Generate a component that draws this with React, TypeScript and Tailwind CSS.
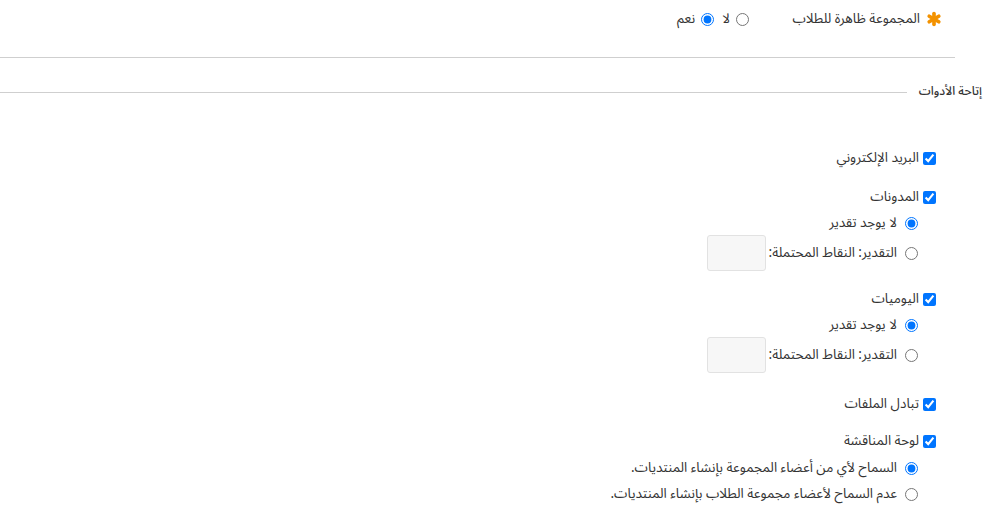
import React from "react";
import { Asterisk } from "lucide-react";

function Check({ label, className = "" }: { label: string; className?: string }) {
  return (
    <label className={`flex items-center gap-[4px] h-[28px] ${className}`}>
      <input type="checkbox" defaultChecked className="m-0 w-[13px] h-[13px]" />
      <span className="leading-[18px]">{label}</span>
    </label>
  );
}

function Radio({
  label,
  name,
  checked,
  children,
  className = "",
}: {
  label: string;
  name: string;
  checked?: boolean;
  children?: React.ReactNode;
  className?: string;
}) {
  return (
    <div className={`flex items-center pr-[18px] ${className}`}>
      <label className="flex items-center gap-[8px]">
        <input type="radio" name={name} defaultChecked={checked} className="m-0 w-[13px] h-[13px]" />
        <span className="leading-[18px]">{label}</span>
      </label>
      {children}
    </div>
  );
}

function Points() {
  return (
    <input
      type="text"
      className="mr-[3px] w-[59px] h-[36px] rounded-[3px] border border-[#e2e2e2] bg-[#f7f7f7]"
    />
  );
}

export default function App() {
  return (
    <div
      dir="rtl"
      className="bg-white h-[513px] text-[13.5px] text-[#333] font-['Noto_Sans_Arabic','DejaVu_Sans',sans-serif]"
    >
      <div className="mr-[38px] h-[58px] border-b border-[#cfcfcf] pr-[15px] pt-[7px]">
        <div className="flex items-center h-[24px]">
          <div className="w-[191px] flex items-center gap-[8px]">
            <Asterisk size={22} strokeWidth={4} className="text-[#f39200] shrink-0 -mx-[5px]" />
            <span className="leading-[18px]">المجموعة ظاهرة للطلاب</span>
          </div>
          <label className="flex items-center gap-[6px] ml-[8px]">
            <input type="radio" name="vis" className="m-0 w-[13px] h-[13px]" />
            <span className="leading-[18px]">لا</span>
          </label>
          <label className="flex items-center gap-[6px]">
            <input type="radio" name="vis" defaultChecked className="m-0 w-[13px] h-[13px]" />
            <span className="leading-[18px]">نعم</span>
          </label>
        </div>
      </div>

      <div className="mt-[24px] flex items-center h-[20px] pr-[11px]">
        <span className="text-[12px] font-medium leading-[20px]">إتاحة الأدوات</span>
        <div className="flex-1 mr-[12px] h-px bg-[#cfcfcf]" />
      </div>

      <div className="pr-[57px] mt-[42px]">
        <Check label="البريد الإلكتروني" />

        <Check label="المدونات" className="mt-[11px]" />
        <Radio label="لا يوجد تقدير" name="blog" checked className="h-[24px]" />
        <Radio label="التقدير: النقاط المحتملة:" name="blog" className="h-[36px]">
          <Points />
        </Radio>

        <Check label="اليوميات" className="mt-[14px]" />
        <Radio label="لا يوجد تقدير" name="journal" checked className="h-[24px]" />
        <Radio label="التقدير: النقاط المحتملة:" name="journal" className="h-[36px]">
          <Points />
        </Radio>

        <Check label="تبادل الملفات" className="mt-[17px]" />

        <Check label="لوحة المناقشة" className="mt-[9px]" />
        <Radio label="السماح لأي من أعضاء المجموعة بإنشاء المنتديات." name="disc" checked className="h-[26px]" />
        <Radio label="عدم السماح لأعضاء مجموعة الطلاب بإنشاء المنتديات." name="disc" className="h-[26px]" />
      </div>
    </div>
  );
}
